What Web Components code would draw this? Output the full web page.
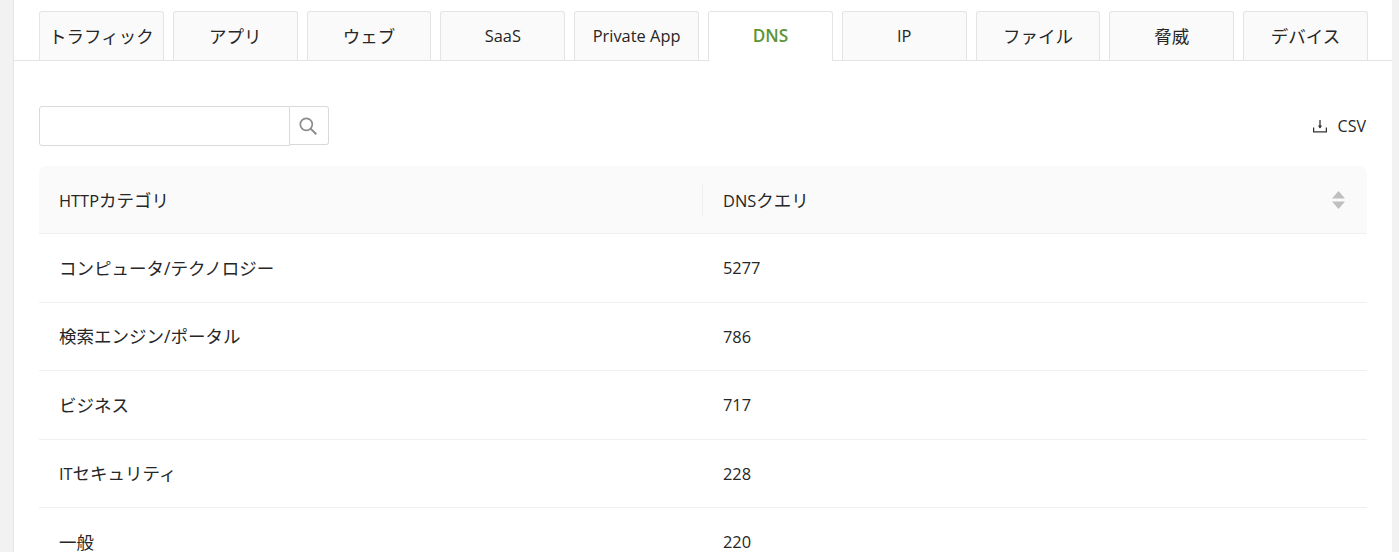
<!DOCTYPE html>
<html lang="ja"><head><meta charset="utf-8">
<style>
html,body{margin:0;padding:0;height:552px;overflow:hidden;background:#f2f2f2}
body{font:16.4px/24px "Open Sans","Noto Sans CJK JP",sans-serif;color:#262626}
</style></head><body>
<app-shell>
  <tab-bar slot="tabs">
    <tab-item><j-t>トラフィック</j-t></tab-item><tab-item><j-t>アプリ</j-t></tab-item><tab-item><j-t>ウェブ</j-t></tab-item><tab-item>SaaS</tab-item><tab-item>Private App</tab-item><tab-item active>DNS</tab-item><tab-item>IP</tab-item><tab-item><j-t>ファイル</j-t></tab-item><tab-item><j-t>脅威</j-t></tab-item><tab-item><j-t>デバイス</j-t></tab-item>
  </tab-bar>
  <tool-bar></tool-bar>
  <data-table></data-table>
</app-shell>
<script>
function def(name,html,init){customElements.define(name,class extends HTMLElement{constructor(){super();this.attachShadow({mode:'open'}).innerHTML=html;}connectedCallback(){init&&init(this)}})}
def('j-t',`<style>:host{display:inline;font-size:17.5px}</style><slot></slot>`);
def('app-shell',`<style>:host{display:block;box-sizing:border-box;margin-left:13px;width:1379px;height:552px;background:#fff;border-left:1px solid #e4e4e4;overflow:hidden}
.tabs{padding:11px 24px 0 25px;border-bottom:1px solid #e4e4e4;height:49px}
.body{padding:45px 25px 0 25px}</style>
<div class="tabs"><slot name="tabs"></slot></div><div class="body"><slot></slot></div>`);
def('tab-bar',`<style>:host{display:flex;gap:9px;height:50px}</style><slot></slot>`);
def('tab-item',`<style>:host{flex:1 1 0;box-sizing:border-box;height:49px;border:1px solid #e4e4e4;border-bottom:0;border-radius:3px 3px 0 0;background:#fafafa;display:flex;align-items:center;justify-content:center;color:#262626}
:host([active]){background:#fff;height:50px;color:#5b9536;font-weight:600;font-size:17.2px;padding-bottom:1px}</style><slot></slot>`);
def('tool-bar',`<style>:host{display:flex;justify-content:space-between;align-items:center;height:40px;margin-bottom:20px}
.s{display:flex;align-items:flex-start}
.i{box-sizing:border-box;width:251px;height:40px;border:1px solid #d9d9d9;border-radius:3px 0 0 3px}
.b{box-sizing:border-box;width:39px;height:39px;border:1px solid #d9d9d9;border-left:0;border-radius:0 3px 3px 0;display:flex;align-items:center;justify-content:center}
.c{display:flex;align-items:center;gap:11px;font-size:16px;color:#262626;margin-right:1px}
svg{display:block}</style>
<div class="s"><div class="i"></div><div class="b"><svg width="20" height="20" viewBox="0 0 20 20" fill="none" stroke="#8c8c8c" stroke-width="1.7" style="margin-right:2px"><circle cx="8.3" cy="8.3" r="6"/><path d="M12.6 12.6l5.7 5.7" stroke-width="2"/></svg></div></div>
<div class="c"><svg width="14" height="14" viewBox="0 0 14 14" fill="none" stroke="#333" stroke-width="1.3"><path d="M.6 8.5v4.4h12.8V8.5"/><path d="M7 1v8"/><path d="M4.9 6.6L7 9.6l2.1-3z" fill="#333" stroke="none"/></svg><span>CSV</span></div>`);
const J=s=>`<j-t>${s}</j-t>`;
const rows=[[J('コンピュータ/テクノロジー'),'5277'],[J('検索エンジン/ポータル'),'786'],[J('ビジネス'),'717'],['IT'+J('セキュリティ'),'228'],[J('一般'),'220']];
def('data-table',`<style>:host{display:block}
.h{display:grid;grid-template-columns:664px 1fr;height:67px;background:#fafafa;border-radius:8px 8px 0 0;border-bottom:1px solid #f0f0f0;align-items:center}
.h>div{padding-left:20px;display:flex;align-items:center;justify-content:space-between;position:relative}
.h span{padding-top:1px}
.h>div+div:before{content:"";position:absolute;left:-1px;top:50%;height:30px;margin-top:-15px;width:1px;background:#f0f0f0}
.r{display:grid;grid-template-columns:664px 1fr;height:67.5px;border-bottom:1px solid #f0f0f0;align-items:center}
.r>div{padding-left:20px;padding-top:1px}
svg{display:block;margin-right:21px}</style>
<div class="h"><div><span>HTTP${J('カテゴリ')}</span></div><div><span>DNS${J('クエリ')}</span><svg width="13" height="18" viewBox="0 0 13 18" fill="#bfbfbf" style="margin-right:22px"><path d="M6.5 0L13 7.5H0z"/><path d="M0 10.5h13L6.5 18z"/></svg></div></div>
${rows.map(r=>`<div class="r"><div>${r[0]}</div><div>${r[1]}</div></div>`).join('')}`);
</script></body></html>
